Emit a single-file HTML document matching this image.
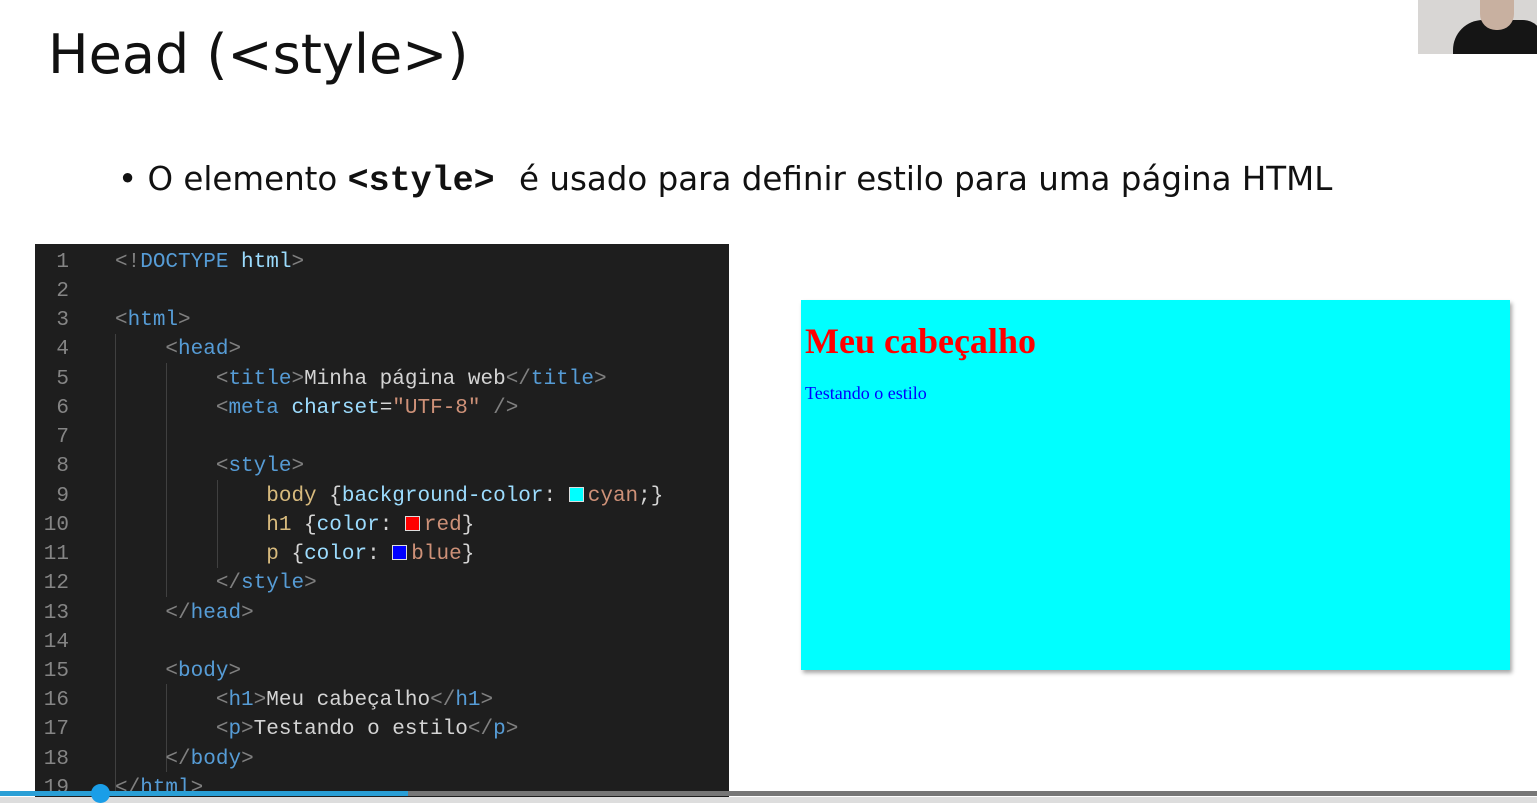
<!DOCTYPE html>
<html><head><meta charset="utf-8"><style>
body{margin:0;width:1537px;height:803px;background:#fff;position:relative;overflow:hidden;font-family:"DejaVu Sans",sans-serif}
.t{position:absolute;left:48px;top:23px;font-size:54px;color:#111;white-space:nowrap}
.b{position:absolute;left:118px;top:160px;font-size:32.5px;color:#111;white-space:nowrap}
.b code{font-family:"Liberation Mono",monospace;font-weight:bold;font-size:35px;margin-right:14px}
.ed{position:absolute;left:35px;top:244px;width:694px;height:559px;background:#1e1e1e;font-family:"Liberation Mono",monospace;font-size:21px}
.ln{position:absolute;left:0;width:34px;text-align:right;color:#858585}
.c{position:absolute;left:80px;white-space:pre;color:#d4d4d4}
.g{color:#808080}.k{color:#569cd6}.a{color:#9cdcfe}.s{color:#ce9178}.y{color:#d7ba7d}
.gl{position:absolute;width:1px;background:#404040}
.sw{display:inline-block;width:13px;height:13px;border:1px solid #ddd;vertical-align:-1px;margin-right:4px}
.pv{position:absolute;left:801px;top:300px;width:709px;height:370px;background:#0ff;box-shadow:2px 3px 4px rgba(0,0,0,.35);font-family:"Liberation Serif",serif}
.pv h1{margin:0;position:absolute;left:4px;top:20px;font-size:36px;color:#f00}
.pv p{margin:0;position:absolute;left:4px;top:83px;font-size:18px;color:#00f}
</style></head><body>
<div class="t">Head (&lt;style&gt;)</div>
<div class="b">• O elemento <code>&lt;style&gt;</code> é usado para definir estilo para uma página HTML</div>
<div style="position:absolute;left:1418px;top:0;width:119px;height:54px;background:#d8d6d4;overflow:hidden"><div style="position:absolute;left:35px;top:20px;width:90px;height:40px;background:#151515;border-radius:30px 20px 0 0"></div><div style="position:absolute;left:62px;top:-6px;width:34px;height:36px;background:#c8b0a0;border-radius:0 0 16px 16px"></div></div>
<div class="ed">
<div class="gl" style="left:80px;top:90px;height:460px"></div>
<div class="gl" style="left:131px;top:119px;height:234px"></div>
<div class="gl" style="left:182px;top:236px;height:88px"></div>
<div class="gl" style="left:131px;top:440px;height:88px"></div>
<div class="ln" style="top:7px">1</div><div class="c" style="top:7px"><span class="g">&lt;!</span><span class="k">DOCTYPE</span> <span class="a">html</span><span class="g">&gt;</span></div>
<div class="ln" style="top:36px">2</div>
<div class="ln" style="top:65px">3</div><div class="c" style="top:65px"><span class="g">&lt;</span><span class="k">html</span><span class="g">&gt;</span></div>
<div class="ln" style="top:94px">4</div><div class="c" style="top:94px">    <span class="g">&lt;</span><span class="k">head</span><span class="g">&gt;</span></div>
<div class="ln" style="top:124px">5</div><div class="c" style="top:124px">        <span class="g">&lt;</span><span class="k">title</span><span class="g">&gt;</span>Minha página web<span class="g">&lt;/</span><span class="k">title</span><span class="g">&gt;</span></div>
<div class="ln" style="top:153px">6</div><div class="c" style="top:153px">        <span class="g">&lt;</span><span class="k">meta</span> <span class="a">charset</span>=<span class="s">"UTF-8"</span> <span class="g">/&gt;</span></div>
<div class="ln" style="top:182px">7</div>
<div class="ln" style="top:211px">8</div><div class="c" style="top:211px">        <span class="g">&lt;</span><span class="k">style</span><span class="g">&gt;</span></div>
<div class="ln" style="top:241px">9</div><div class="c" style="top:241px">            <span class="y">body</span> {<span class="a">background-color</span>: <span class="sw" style="background:#0ff"></span><span class="s">cyan</span>;}</div>
<div class="ln" style="top:270px">10</div><div class="c" style="top:270px">            <span class="y">h1</span> {<span class="a">color</span>: <span class="sw" style="background:#f00"></span><span class="s">red</span>}</div>
<div class="ln" style="top:299px">11</div><div class="c" style="top:299px">            <span class="y">p</span> {<span class="a">color</span>: <span class="sw" style="background:#00f"></span><span class="s">blue</span>}</div>
<div class="ln" style="top:328px">12</div><div class="c" style="top:328px">        <span class="g">&lt;/</span><span class="k">style</span><span class="g">&gt;</span></div>
<div class="ln" style="top:358px">13</div><div class="c" style="top:358px">    <span class="g">&lt;/</span><span class="k">head</span><span class="g">&gt;</span></div>
<div class="ln" style="top:387px">14</div>
<div class="ln" style="top:416px">15</div><div class="c" style="top:416px">    <span class="g">&lt;</span><span class="k">body</span><span class="g">&gt;</span></div>
<div class="ln" style="top:445px">16</div><div class="c" style="top:445px">        <span class="g">&lt;</span><span class="k">h1</span><span class="g">&gt;</span>Meu cabeçalho<span class="g">&lt;/</span><span class="k">h1</span><span class="g">&gt;</span></div>
<div class="ln" style="top:474px">17</div><div class="c" style="top:474px">        <span class="g">&lt;</span><span class="k">p</span><span class="g">&gt;</span>Testando o estilo<span class="g">&lt;/</span><span class="k">p</span><span class="g">&gt;</span></div>
<div class="ln" style="top:504px">18</div><div class="c" style="top:504px">    <span class="g">&lt;/</span><span class="k">body</span><span class="g">&gt;</span></div>
<div class="ln" style="top:533px">19</div><div class="c" style="top:533px"><span class="g">&lt;/</span><span class="k">html</span><span class="g">&gt;</span></div>
</div>
<div class="pv"><h1>Meu cabeçalho</h1><p>Testando o estilo</p></div>
<div style="position:absolute;left:0;top:797px;width:1537px;height:6px;background:#ddd"></div>
<div style="position:absolute;left:0;top:791px;width:1537px;height:5px;background:#777"></div>
<div style="position:absolute;left:0;top:791px;width:408px;height:5px;background:#2a9fd6"></div>
<div style="position:absolute;left:91px;top:784px;width:19px;height:19px;border-radius:50%;background:#1a9ee8"></div>
</body></html>
